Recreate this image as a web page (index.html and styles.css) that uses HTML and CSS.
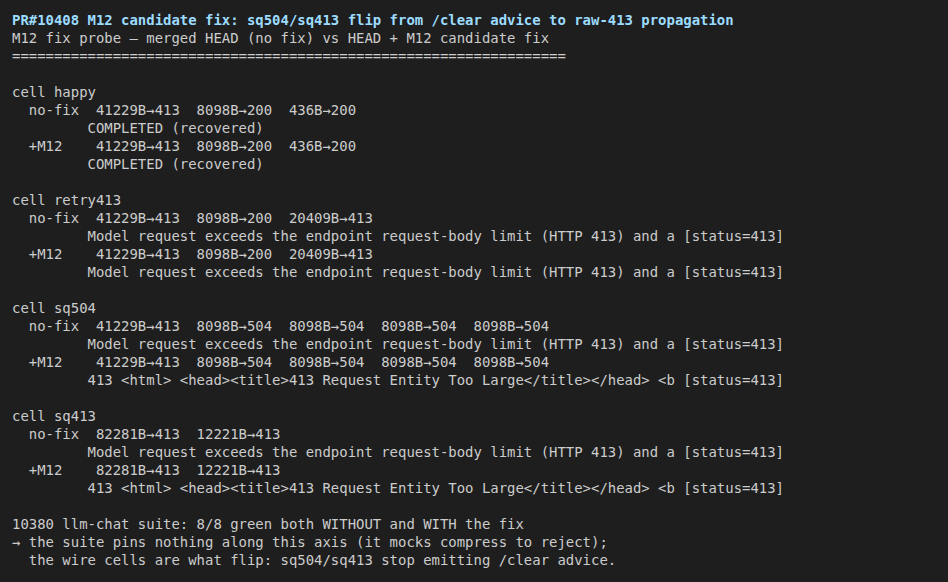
FILE: index.html
```html
<!DOCTYPE html>
<html>
<head>
<meta charset="utf-8">
<link rel="stylesheet" href="styles.css">
</head>
<body>
<pre class="term"><span class="title">PR#10408 M12 candidate fix: sq504/sq413 flip from /clear advice to raw-413 propagation</span>
M12 fix probe — merged HEAD (no fix) vs HEAD + M12 candidate fix
==================================================================

cell happy
  no-fix  41229B→413  8098B→200  436B→200
         COMPLETED (recovered)
  +M12    41229B→413  8098B→200  436B→200
         COMPLETED (recovered)

cell retry413
  no-fix  41229B→413  8098B→200  20409B→413
         Model request exceeds the endpoint request-body limit (HTTP 413) and a [status=413]
  +M12    41229B→413  8098B→200  20409B→413
         Model request exceeds the endpoint request-body limit (HTTP 413) and a [status=413]

cell sq504
  no-fix  41229B→413  8098B→504  8098B→504  8098B→504  8098B→504
         Model request exceeds the endpoint request-body limit (HTTP 413) and a [status=413]
  +M12    41229B→413  8098B→504  8098B→504  8098B→504  8098B→504
         413 &lt;html&gt; &lt;head&gt;&lt;title&gt;413 Request Entity Too Large&lt;/title&gt;&lt;/head&gt; &lt;b [status=413]

cell sq413
  no-fix  82281B→413  12221B→413
         Model request exceeds the endpoint request-body limit (HTTP 413) and a [status=413]
  +M12    82281B→413  12221B→413
         413 &lt;html&gt; &lt;head&gt;&lt;title&gt;413 Request Entity Too Large&lt;/title&gt;&lt;/head&gt; &lt;b [status=413]

10380 llm-chat suite: 8/8 green both WITHOUT and WITH the fix
→ the suite pins nothing along this axis (it mocks compress to reject);
  the wire cells are what flip: sq504/sq413 stop emitting /clear advice.</pre>
</body>
</html>
```

FILE: styles.css
```css
html, body {
  margin: 0;
  padding: 0;
  background: #1e1e1e;
}
.term {
  margin: 0;
  padding: 11px 12px;
  font-family: "DejaVu Sans Mono", monospace;
  font-size: 13.95px;
  line-height: 18px;
  color: #cccccc;
  white-space: pre;
}
.title {
  color: #9cdcfe;
  font-weight: bold;
}
```
